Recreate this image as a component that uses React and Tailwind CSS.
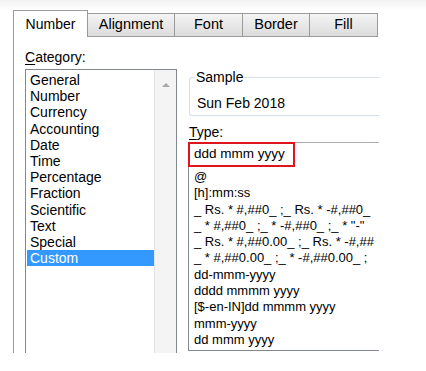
import React from 'react';

const categories = [
  'General', 'Number', 'Currency', 'Accounting', 'Date', 'Time',
  'Percentage', 'Fraction', 'Scientific', 'Text', 'Special', 'Custom',
];

// only the part of each format code that fits in the box
const types = [
  '@',
  '[h]:mm:ss',
  '_ Rs. * #,##0_ ;_ Rs. * -#,##0_',
  '_ * #,##0_ ;_ * -#,##0_ ;_ * "-"',
  '_ Rs. * #,##0.00_ ;_ Rs. * -#,##',
  '_ * #,##0.00_ ;_ * -#,##0.00_ ;',
  'dd-mmm-yyyy',
  'dddd mmmm yyyy',
  '[$-en-IN]dd mmmm yyyy',
  'mmm-yyyy',
  'dd mmm yyyy',
];

const tabs = [
  { label: 'Alignment', w: 'w-[87px]' },
  { label: 'Font', w: 'w-[68px]' },
  { label: 'Border', w: 'w-[67px]' },
  { label: 'Fill', w: 'w-[68px]' },
];

export default function App() {
  return (
    <div className="w-[426px] h-[371px] bg-white overflow-hidden text-black font-['Liberation_Sans',Arial,sans-serif]">
      <div className="h-[10px] bg-gradient-to-b from-[#f2f2f2] to-white" />
      <div className="ml-[13px] w-[366px]">
        {/* Tabs */}
        <div className="flex items-end h-[27px]">
          <div className="w-[75px] h-[27px] border border-b-0 border-[#9a9a9a] bg-white flex items-center justify-center text-[14px]">
            Number
          </div>
          {tabs.map((t) => (
            <div
              key={t.label}
              className={`${t.w} h-[24px] border border-l-0 border-[#9a9a9a] bg-gradient-to-b from-[#f4f4f4] to-[#dcdcdc] flex items-center justify-center text-[14.5px] pb-[1px]`}
            >
              {t.label}
            </div>
          ))}
        </div>

        {/* Panel */}
        <div className="h-[316px] border-l border-[#9a9a9a] flex pl-[11px]">
          {/* Category column */}
          <div className="w-[152px] flex flex-col">
            <div className="h-[32px] pt-[12px] text-[14px] leading-[16px]">
              <span className="underline underline-offset-2">C</span>ategory:
            </div>
            <div className="flex-1 border border-b-0 border-[#828790] flex">
              <div className="flex-1 pt-[2px] pl-[1px]">
                {categories.map((c) => (
                  <div
                    key={c}
                    className={`h-[16.2px] leading-[16.2px] text-[14px] pl-[3px] ${
                      c === 'Custom' ? 'bg-[#3399ff] text-white' : ''
                    }`}
                  >
                    {c}
                  </div>
                ))}
              </div>
              <div className="w-[22px] bg-[#f4f4f4] border-l border-[#e3e3e3] flex justify-center pt-[12px]">
                <svg width="8" height="5" viewBox="0 0 8 5">
                  <path d="M0 5 L4 1 L8 5 Z" fill="#a8a8a8" />
                </svg>
              </div>
            </div>
          </div>

          {/* Right column */}
          <div className="ml-[11px] flex-1 flex flex-col overflow-hidden">
            <fieldset className="mt-[32px] ml-[1px] h-[47px] border border-r-0 border-[#d5dfe5] rounded-l-[3px] pl-[7px]">
              <legend className="text-[14px] leading-[16px] px-[1px] -ml-[2px]">Sample</legend>
              <div className="text-[14px] leading-[16px] pt-[10px]">Sun Feb 2018</div>
            </fieldset>

            <div className="mt-[8px] h-[18px] text-[14px] leading-[16px] pl-[1px]">
              <span className="underline underline-offset-2">T</span>ype:
            </div>

            <div className="h-[25px] border-t border-[#abadb3] flex">
              <div className="w-[107px] h-[25px] -mt-px border-2 border-[#e0141e] pl-[4px] text-[13.5px] leading-[20px]">
                ddd mmm yyyy
              </div>
            </div>

            <div className="h-[184px] border-l border-b border-[#828790] pt-[2px] pl-[5px] overflow-hidden">
              {types.map((t) => (
                <div key={t} className="h-[16.3px] leading-[16.3px] text-[13px] whitespace-nowrap">
                  {t}
                </div>
              ))}
            </div>
          </div>
        </div>
      </div>
    </div>
  );
}
